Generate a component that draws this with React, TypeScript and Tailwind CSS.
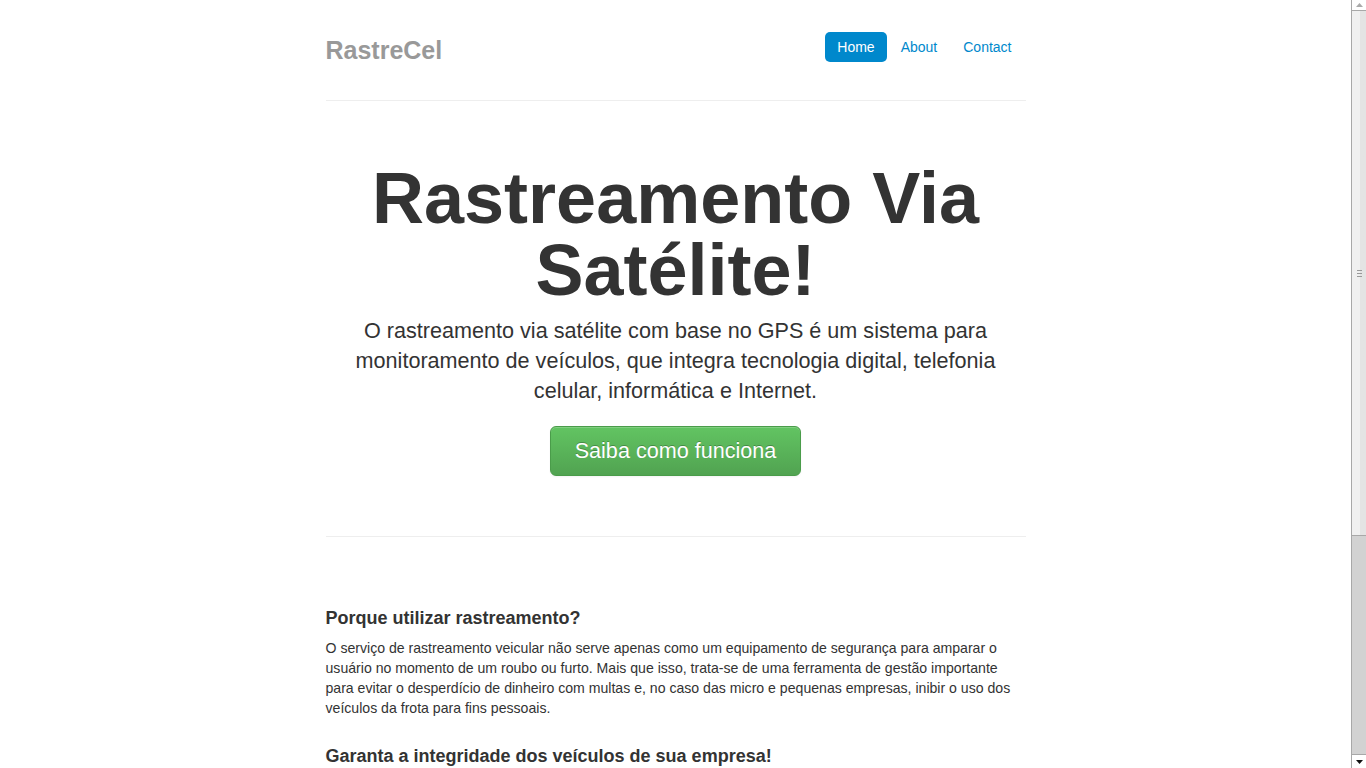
const navItems = [
  { label: 'Home', active: true },
  { label: 'About', active: false },
  { label: 'Contact', active: false },
];

const sections = [
  {
    title: 'Porque utilizar rastreamento?',
    text: 'O serviço de rastreamento veicular não serve apenas como um equipamento de segurança para amparar o usuário no momento de um roubo ou furto. Mais que isso, trata-se de uma ferramenta de gestão importante para evitar o desperdício de dinheiro com multas e, no caso das micro e pequenas empresas, inibir o uso dos veículos da frota para fins pessoais.',
  },
  {
    title: 'Garanta a integridade dos veículos de sua empresa!',
    text: 'Com o rastreamento você acompanha em tempo real a localização de cada veículo, recebe alertas de velocidade e de saída de rota, e conta com uma central de atendimento 24 horas para agir rapidamente em caso de ocorrência.',
  },
];

function Scrollbar() {
  return (
    <div className="fixed top-0 right-0 flex h-screen w-[15px] flex-col border-l border-[#a8a8a8] bg-[#d2d2d2]">
      <div className="flex h-[10px] items-center justify-center bg-white">
        <svg width="7" height="4" viewBox="0 0 7 4">
          <path d="M0 4 L3.5 0 L7 4 Z" fill="#aaa" />
        </svg>
      </div>
      <div className="flex h-[526px] items-center justify-center border-y border-[#a8a8a8] bg-gradient-to-r from-[#f0f0f0] from-60% to-[#e4e4e4] to-60%">
        <div className="flex w-[5px] flex-col gap-[2px]">
          <div className="h-px bg-[#999]" />
          <div className="h-px bg-[#999]" />
          <div className="h-px bg-[#999]" />
        </div>
      </div>
      <div className="flex-1" />
      <div className="flex h-[14px] items-center justify-center border-t border-[#a8a8a8] bg-white">
        <svg width="7" height="4" viewBox="0 0 7 4">
          <path d="M0 0 L7 0 L3.5 4 Z" fill="#111" />
        </svg>
      </div>
    </div>
  );
}

export default function App() {
  return (
    <div className="min-h-screen bg-white pr-[15px] font-['Liberation_Sans',Arial,sans-serif] text-[14px] leading-[20px] text-[#333]">
      <div className="mx-auto w-[700px] pt-[20px] pb-[40px]">
        {/* Masthead */}
        <div className="flex items-start justify-between pt-[10px] pb-[10px]">
          <h3 className="text-[25px] leading-[40px] font-bold text-[#999]">RastreCel</h3>
          <ul className="flex pt-[2px]">
            {navItems.map((item) => (
              <li key={item.label} className="mr-[2px]">
                <a
                  href="#"
                  className={
                    item.active
                      ? 'block rounded-[5px] bg-[#0088cc] px-[12px] py-[8px] leading-[14px] text-white'
                      : 'block rounded-[5px] px-[12px] py-[8px] leading-[14px] text-[#0088cc]'
                  }
                >
                  {item.label}
                </a>
              </li>
            ))}
          </ul>
        </div>

        <hr className="my-[20px] border-t border-b border-t-[#eee] border-b-white" />

        {/* Jumbotron */}
        <div className="my-[60px] flex flex-col items-center text-center">
          <h1 className="mb-[10px] text-[72px] leading-[72px] font-bold text-[#333]">
            Rastreamento Via
            <br />
            Satélite!
          </h1>
          <p className="mb-[20px] text-[21.6px] leading-[30px] text-[#333]">
            O rastreamento via satélite com base no GPS é um sistema para monitoramento de veículos, que integra
            tecnologia digital, telefonia celular, informática e Internet.
          </p>
          <a
            href="#"
            className="rounded-[6px] border border-[#4a9c4a] bg-gradient-to-b from-[#62c462] to-[#51a351] px-[24px] py-[14px] text-[21.6px] leading-[20px] text-white [text-shadow:0_-1px_0_rgba(0,0,0,0.25)] shadow-[inset_0_1px_0_rgba(255,255,255,0.2),0_1px_2px_rgba(0,0,0,0.05)]"
          >
            Saiba como funciona
          </a>
        </div>

        <hr className="my-[20px] border-t border-b border-t-[#eee] border-b-white" />

        {/* Marketing */}
        <div className="mt-[60px] flex flex-col gap-[8px]">
          {sections.map((s) => (
            <div key={s.title}>
              <h4 className="mt-[10px] mb-[10px] text-[18px] leading-[20px] font-bold text-[#333]">{s.title}</h4>
              <p className="mb-[10px] text-[14.1px]">{s.text}</p>
            </div>
          ))}
        </div>

        <hr className="my-[20px] border-t border-b border-t-[#eee] border-b-white" />

        <div className="text-[#333]">
          <p>&copy; RastreCel 2013</p>
        </div>
      </div>
      <Scrollbar />
    </div>
  );
}
